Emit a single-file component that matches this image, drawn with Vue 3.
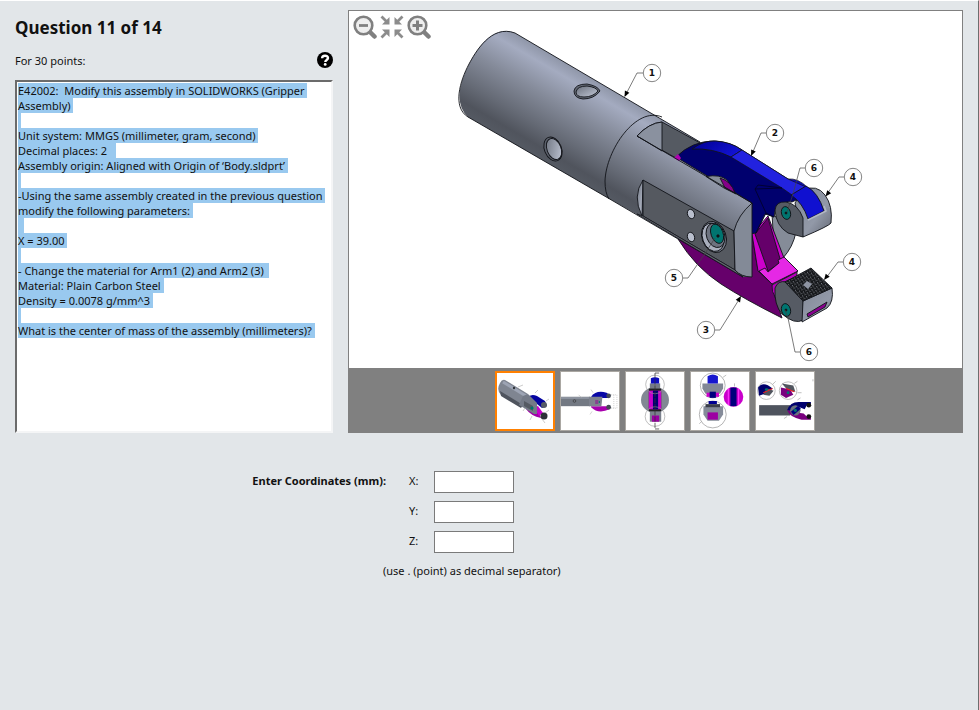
<script setup>
import { ref, reactive } from 'vue'

const lines = [
  'E42002:  Modify this assembly in SOLIDWORKS (Gripper ',
  'Assembly) ',
  ' ',
  'Unit system: MMGS (millimeter, gram, second) ',
  'Decimal places: 2   ',
  'Assembly origin: Aligned with Origin of ‘Body.sldprt’ ',
  ' ',
  '-Using the same assembly created in the previous question ',
  'modify the following parameters: ',
  '  ',
  'X = 39.00 ',
  ' ',
  '- Change the material for Arm1 (2) and Arm2 (3)  ',
  'Material: Plain Carbon Steel ',
  'Density = 0.0078 g/mm^3 ',
  ' ',
  'What is the center of mass of the assembly (millimeters)? '
]

const balloons = [
  { n: 1, x: 652, y: 73, path: 'M643 73H637L625 96', tip: [624.5, 97, 26] },
  { n: 2, x: 775, y: 133, path: 'M766 133H761L752 154', tip: [751, 156, 24] },
  { n: 6, x: 814, y: 168, path: 'M805 168H800L793 194L787 212' },
  { n: 4, x: 853, y: 177, path: 'M844 177H839L827 194', tip: [825.5, 196.5, 38] },
  { n: 4, x: 852, y: 262, path: 'M843 262H838L826 278', tip: [824, 280, 38] },
  { n: 5, x: 674, y: 278, path: 'M683 278H688L704 255L715 238' },
  { n: 3, x: 706, y: 330, path: 'M715 330H720L740 298', tip: [741, 296, 211] },
  { n: 6, x: 809, y: 352, path: 'M800 352H795L788 318L785 310' }
]

const thumbs = ['Isometric view', 'Side view', 'Front view', 'Detail views', 'Section views']
const active = ref(0)
const coords = reactive({ X: '', Y: '', Z: '' })
</script>

<template>
  <main class="page">
    <div class="columns">
      <section class="question">
        <h1>Question 11 of 14</h1>
        <div class="points">
          <span>For 30 points:</span>
          <button class="help" aria-label="Help">
            <svg viewBox="0 0 16 16" width="16" height="16">
              <circle cx="8" cy="8" r="8" />
              <path d="M5.1 6.3C5.1 2.9 11 2.9 11 6.1C11 8 8.300 7.900 8.300 9.900" fill="none" stroke="#fff" stroke-width="2.400" />
              <circle cx="8.200" cy="12.400" r="1.400" fill="#fff" />
            </svg>
          </button>
        </div>
        <div class="prompt">
          <div v-for="(line, i) in lines" :key="i" class="line"><mark>{{ line }}</mark></div>
        </div>
      </section>

      <section class="viewer">
        <div class="stage">
          <svg class="drawing" viewBox="349 11 613 357" role="img" aria-label="Gripper assembly">
            <defs>
              <linearGradient id="steel" gradientUnits="userSpaceOnUse" x1="515" y1="33" x2="466" y2="117">
                <stop offset="0" stop-color="#8f96a8" />
                <stop offset=".13" stop-color="#a4abc0" />
                <stop offset=".4" stop-color="#858b9a" />
                <stop offset=".7" stop-color="#656a75" />
                <stop offset=".88" stop-color="#50545d" />
                <stop offset="1" stop-color="#555a63" />
              </linearGradient>
              <linearGradient id="pad" x1="0" y1="0" x2="1" y2="1">
                <stop offset="0" stop-color="#838a98" />
                <stop offset=".6" stop-color="#9299a8" />
                <stop offset="1" stop-color="#626773" />
              </linearGradient>
              <linearGradient id="hole" x1="0" y1="0" x2="1" y2="1">
                <stop offset="0" stop-color="#6a707c" />
                <stop offset="1" stop-color="#c3c9d8" />
              </linearGradient>
              <linearGradient id="arm" x1="0" y1="0" x2="1" y2=".5">
                <stop offset="0" stop-color="#000090" />
                <stop offset="1" stop-color="#1212d2" />
              </linearGradient>
              <pattern id="knurl" width="4" height="4" patternUnits="userSpaceOnUse" patternTransform="rotate(12)">
                <rect width="4" height="4" fill="#15171a" />
                <path d="M0 1.500L1.500 0M2 2.200L3.500 3.500" stroke="#8b9098" stroke-width=".9" />
              </pattern>
            </defs>

            <g stroke="#111318" stroke-width=".9" stroke-linejoin="round">
              <path d="M772 214L796 232Q793 247 783 258L774 246Z" fill="#858c98" />
              <path d="M678 239Q695 267 721 284Q744 299 782 318L776 300L772 283L758 270L752 234L720 220Z" fill="#66006b" />
              <path d="M752 234L768 216L784 258L798 271L772 284L758 271Z" fill="#cc00cc" />
              <path d="M755 234L768 218L781 262L768 271Z" fill="#65006a" />
              <path d="M759 271L765 268L768 272L779 263L778 260L784 257L798 271L772 284Z" fill="#e528e5" />
              <path d="M772 285L797 272V277L779 284L776 299Q771 291 772 285Z" fill="#b800bd" />

              <path d="M515 33Q491 23 470 62Q450 100 468 117L608 198L643 218L743 277L752 277V203L700 142Z" fill="url(#steel)" stroke="none" />
              <path d="M700 142L515 33C491 24 475 53 469 64C460 81 452 107 468 117L608 198L743 277" fill="none" />
              <path d="M662 117C636 106 606 150 605 181Q605 193 609 199" fill="none" />
              <path d="M637 136Q649 123 662 122L702 144Q687 147 676 158Z" fill="#555a62" />
              <path d="M637 136Q649 123 662 122V151Z" fill="#8a919f" />

              <path d="M803 190Q817 184 825 195Q833 206 831 223Q829 226 803 237L795 203Z" fill="url(#pad)" />
              <path d="M676 157Q692 141 714 141Q731 142 742 150L788 179L807 195L792 202Q783 200 775 211L774 217L765 214L756 233L750 234L752 203Z" fill="#00006e" />
              <path d="M692 149Q704 140 716 141Q731 142 742 150L731 157Q713 148 692 149Z" fill="url(#arm)" />
              <path d="M788 179Q798 178 807 187L798 192Z" fill="#0b0bb8" stroke-width=".7" />
              <path d="M742 150L788 179L806 187L792 195L782 188L731 157Z" fill="#2222df" stroke-width=".7" />
              <path d="M806 186Q818 192 824 211L808 219Q803 203 791 195Z" fill="#1010d0" />
              <path d="M808 220L826 211L824 206" fill="none" stroke="#b2b7c4" stroke-width="1.600" />
              <path d="M782 188L758 185L755 189L766 213L774 217M766 213L756 233M755 189L782 188" fill="none" stroke="#00002c" />
              <path d="M674 158L678 154L681 158L679 161Z" fill="#b000b0" stroke="none" />
              <path d="M706 176.500Q720 174 727 180L736 194L724 188Z" fill="#858c98" />
              <path d="M720 178Q731 181 735 193L725 188Z" fill="#850088" />
              <path d="M775 210Q776 201 786 202Q798 204 803 218V237L788 233Q776 226 775 210Z" fill="#565b64" />

              <path d="M643 180Q632 196 642 216Z" fill="url(#hole)" />
              <path d="M643 180L734 231L735 270L643 216Z" fill="#555960" />
              <path d="M643 216L735 270L743 277L637 214Z" fill="#666b74" stroke-width=".7" />
              <path d="M734 231Q738 215 752 203V277Q741 277 735 270Z" fill="#838a97" />
              <path d="M637 136L752 203" />
              <g transform="rotate(-20 714 237)">
                <ellipse cx="714" cy="237" rx="12" ry="16" fill="#767c89" />
                <ellipse cx="713" cy="237" rx="10.500" ry="14.500" fill="#a9afbd" />
                <ellipse cx="716" cy="236" rx="9" ry="12.500" fill="#6d7380" />
                <ellipse cx="718" cy="235" rx="6" ry="10" fill="#00746f" />
              </g>
              <ellipse cx="691" cy="214" rx="3.500" ry="4.800" transform="rotate(-20 691 214)" fill="#b9bfcd" />
              <ellipse cx="691" cy="237" rx="3.500" ry="4.800" transform="rotate(-20 691 237)" fill="#b9bfcd" />
              <path d="M574 91Q575 84 587 84Q598 86 600 91Q594 99 583 99Q574 98 574 91Z" fill="#656b77" />
              <path d="M576 92Q577 86 587 86Q596 87 598 91Q593 97 584 97Q576 97 576 92Z" fill="url(#hole)" />
              <ellipse cx="553" cy="149" rx="8.500" ry="12.500" transform="rotate(-22 553 149)" fill="#5b606b" />
              <ellipse cx="554" cy="149" rx="7" ry="11" transform="rotate(-22 554 149)" fill="url(#hole)" />

              <path d="M775 288Q778 280 786 282L803 301V320Q795 325 782 314Q774 305 775 288Z" fill="#565b64" />
              <path d="M803 301L832 288Q834 302 827 308L802 322Z" fill="url(#pad)" />
              <path d="M807 314L827 302L825 307L808 317Z" fill="#8a0090" />
              <path d="M785 282L811 268L832 288L803 301Z" fill="url(#knurl)" />
              <path d="M803 285L807 281L812 284L808 289Z" fill="#8e94a2" stroke="none" />
              <ellipse cx="786" cy="213" rx="4.500" ry="6.500" transform="rotate(-15 786 213)" fill="#00746f" />
              <ellipse cx="786" cy="310" rx="4.500" ry="6.500" transform="rotate(-15 786 310)" fill="#00746f" />
              <g fill="#111"><circle cx="718" cy="236" r="1.200" /><circle cx="786" cy="213" r="1" /><circle cx="786" cy="310" r="1" /></g>
            </g>

            <g v-for="(b, i) in balloons" :key="i">
              <path :d="b.path" fill="none" stroke="#444" stroke-width=".7" />
              <path v-if="b.tip" d="M0 0L-2.500 -6H2.500Z" :transform="`translate(${b.tip[0]} ${b.tip[1]}) rotate(${b.tip[2]})`" />
              <circle :cx="b.x" :cy="b.y" r="8.700" fill="#fff" stroke="#666" stroke-width=".8" />
              <text class="num" :x="b.x" :y="b.y + 3" text-anchor="middle">{{ b.n }}</text>
            </g>
          </svg>

          <div class="tools">
            <button aria-label="Zoom out">
              <svg viewBox="0 0 24 24" width="24" height="24" fill="none" stroke="#808080">
                <path d="M16.500 16.500L21.500 21.500" stroke-width="4.500" stroke-linecap="round" />
                <circle cx="10.500" cy="10.500" r="8.800" fill="#eee" stroke-width="2.600" />
                <path d="M6 10.500H15" stroke-width="2.800" />
              </svg>
            </button>
            <button aria-label="Fit to window">
              <svg viewBox="0 0 24 24" width="24" height="24" fill="none" stroke="#8c8c8c" stroke-width="2.800">
                <path d="M1.500 1.500L7 7M22.500 1.500L17 7M1.500 22.500L7 17M22.500 22.500L17 17" />
                <path d="M9.500 2V9.500H2ZM14.500 2V9.500H22ZM2 14.500H9.500V22ZM22 14.500H14.500V22Z" fill="#8c8c8c" stroke="none" />
              </svg>
            </button>
            <button aria-label="Zoom in">
              <svg viewBox="0 0 24 24" width="24" height="24" fill="none" stroke="#808080">
                <path d="M16.500 16.500L21.500 21.500" stroke-width="4.500" stroke-linecap="round" />
                <circle cx="10.500" cy="10.500" r="8.800" fill="#eee" stroke-width="2.600" />
                <path d="M5.500 10.500H15.500M10.500 5.500V15.500" stroke-width="3" />
              </svg>
            </button>
          </div>
        </div>

        <nav class="thumbs" aria-label="Views">
          <button v-for="(t, i) in thumbs" :key="t" :aria-label="t" :class="{ active: i === active }" @click="active = i">
            <svg v-if="i === 0" viewBox="0 0 56 56">
              <path d="M31 34L42 40L44 45Q34 43 29 36Z" fill="#a000a6" />
              <path d="M30 25Q34 20 40 23L48 28L50 33L45 35L40 31V37L31 32Z" fill="#0404a0" />
              <path d="M37 34L41 33L46 40L42 43Z" fill="#c800ce" />
              <path d="M8 7L31 21L24 34L4 22Q-1 17 3 10Q5 6 8 7Z" fill="#7f8591" />
              <path d="M3 18L26 32L24 35L4 23Z" fill="#4f545e" />
              <path d="M6 9L29 23" stroke="#9da4b4" stroke-width="3" />
              <path d="M31 21L26 23L22 32L37 41H40V30Z" fill="#747a87" />
              <path d="M27 28L36 33V38L27 33Z" fill="#555a63" />
              <circle cx="35" cy="35" r="1.600" fill="#00746f" />
              <circle cx="47" cy="32" r="3" fill="#555b66" /><circle cx="47" cy="43" r="3.500" fill="#2d3138" />
              <path d="M21 14L26 12M38 20L41 17M49 28L52 26M48 40L52 37M35 43L33 47M45 46L48 50M28 35L26 38" stroke="#aaa" stroke-width=".6" />
              <circle cx="17" cy="15" r="1.200" fill="#30343a" />
            </svg>
            <svg v-else-if="i === 1" viewBox="0 0 56 56">
              <path d="M0 24H28V33H0Z" fill="#737983" /><path d="M0 25H28" stroke="#8d939f" stroke-width="2" />
              <path d="M29 24Q34 17 44 20L48 23L45 25L36 25Z" fill="#0808a6" />
              <path d="M29 33H37L45 33L47 36Q36 41 29 34Z" fill="#a800ad" />
              <path d="M27 24H40L39 33H27Z" fill="#7d828e" />
              <circle cx="46" cy="23" r="2.300" fill="#444a54" /><circle cx="46" cy="34" r="2.300" fill="#444a54" />
              <circle cx="13" cy="28" r="1.300" fill="none" stroke="#333" stroke-width=".6" />
              <path d="M33 28H36M33 30H36" stroke="#900090" /><path d="M37 28V30" stroke="#00746f" /><path d="M48 22H54V35H48M51 22V35" stroke="#aaa" stroke-width=".5" stroke-dasharray="1 1" fill="none" />
              <path d="M17 22L20 25M31 20L29 17M30 38L28 41" stroke="#aaa" stroke-width=".5" />
            </svg>
            <svg v-else-if="i === 2" viewBox="0 0 56 56">
              <ellipse cx="28" cy="27" rx="13.500" ry="12.500" fill="#828894" />
              <path d="M23 11H33V18H23Z" fill="#747a86" /><path d="M23 38H34V48H23Z" fill="#7b818d" />
              <path d="M24 6Q28 4 32 6V11H24Z" fill="#0c0cbf" />
              <path d="M22 16H34V38H22Z" fill="#222" /><path d="M22 18H34V36H22Z" fill="#c600cc" /><path d="M26 18H31V36H26Z" fill="#00006f" />
              <path d="M25 42H32V48H25Z" fill="#9c00a2" />
              <circle cx="28" cy="12" r="9" fill="none" stroke="#999" stroke-width=".6" /><circle cx="28" cy="43" r="9.500" fill="none" stroke="#999" stroke-width=".6" />
              <path d="M28 1V55M28 1H32M28 55H32" stroke="#333" stroke-width=".7" stroke-dasharray="5 1" fill="none" />
            </svg>
            <svg v-else-if="i === 3" viewBox="0 0 56 56">
              <circle cx="21" cy="13" r="12" fill="#fff" stroke="#999" stroke-width=".7" />
              <path d="M11 11H31V16L28 21H14L11 16Z" fill="#828895" /><path d="M16 4Q21 1 26 4V11H16Z" fill="#1717ce" />
              <path d="M15 20H27V24H15Z" fill="#cc00c8" /><path d="M18 19H24V25H18Z" fill="#00007d" />
              <circle cx="21" cy="41" r="13" fill="#fff" stroke="#999" stroke-width=".7" />
              <path d="M12 33H31V41L27 47H16L12 41Z" fill="#858b99" /><path d="M16 39H26V46H16Z" fill="#9c00a2" />
              <path d="M17 28H25V31H17Z" fill="#000091" /><path d="M14 31H28V34H14Z" fill="#3b3f49" />
              <circle cx="41" cy="24" r="9.500" fill="#c900cb" /><path d="M38 15H44V33H38Z" fill="#00007c" /><path d="M36 16V32M46 16V32" stroke="#ff3aff" />
              <path d="M31 5L34 3M10 48L8 50M42 14V11" stroke="#999" stroke-width=".6" />
            </svg>
            <svg v-else viewBox="0 0 56 56">
              <circle cx="10" cy="18" r="8.500" fill="#fff" stroke="#999" stroke-width=".6" /><circle cx="31" cy="18" r="8.500" fill="#fff" stroke="#999" stroke-width=".6" />
              <path d="M2 15Q7 8 16 16L11 20L3 23Z" fill="#00006c" /><path d="M11 16L17 18L13 23L7 22Z" fill="#50555e" />
              <path d="M25 11L36 13L38 19L31 18Z" fill="#50555e" /><path d="M24 15L33 17L36 22L29 25L24 22Z" fill="#79007e" />
              <path d="M7 20L16 16M29 16L37 19" stroke="#e22" stroke-width="1" />
              <circle cx="10" cy="17" r="1.400" fill="#00746f" /><circle cx="31" cy="20" r="1.400" fill="#00746f" />
              <path d="M3 32H33V42H3Z" fill="#4f545e" />
              <path d="M30 37Q33 29 41 29H53V32H49L47 36L42 34L38 38Z" fill="#00006d" />
              <path d="M30 37L39 39L46 40L49 43H53V46H44Q33 44 30 37Z" fill="#79007e" />
              <circle cx="38" cy="37" r="5" fill="#69717d" /><path d="M35 40L42 34" stroke="#00007c" stroke-width="4" /><circle cx="38" cy="37" r="1.500" fill="#00746f" />
              <circle cx="51" cy="32" r="2.300" fill="#111" /><circle cx="51" cy="43" r="2.300" fill="#111" />
              <path d="M16 12L19 9M37 11L40 9M40 20H44M40 27L43 25M30 43L27 45M55 7V9" stroke="#999" stroke-width=".6" />
            </svg>
          </button>
        </nav>
      </section>
    </div>

    <form class="answer" @submit.prevent>
      <strong>Enter Coordinates (mm):</strong>
      <div class="fields">
        <div v-for="(v, axis) in coords" :key="axis" class="field">
          <label :for="`axis-${axis}`">{{ axis }}:</label>
          <input :id="`axis-${axis}`" v-model="coords[axis]" type="text" />
        </div>
      </div>
      <p>(use . (point) as decimal separator)</p>
    </form>
  </main>
</template>

<style>
body {
  background: #e2e6e9;
}
</style>

<style scoped>
.page {
  box-sizing: border-box;
  min-height: 100vh;
  padding: 9px 15px 0 15px;
  border-top: 1px solid #fff;
  border-right: 1px solid #6e6e6e;
  background: #e2e6e9;
  color: #111;
  font: 11px/15px "Noto Sans", "Open Sans", sans-serif;
}
button {
  display: block;
  padding: 0;
  border: 0;
  background: none;
  cursor: pointer;
}
svg {
  display: block;
}
.columns {
  display: flex;
  gap: 15px;
}
.question {
  display: flex;
  flex-direction: column;
  flex: 0 0 318px;
}
h1 {
  margin: 6px 0 0;
  font-size: 17px;
  line-height: 24px;
}
.points {
  display: flex;
  align-items: center;
  justify-content: space-between;
  height: 24px;
  margin: 8px 0;
}
.prompt {
  flex: 1;
  box-sizing: border-box;
  padding: 1px 0;
  overflow: hidden;
  border: 2px solid;
  border-color: #6b6b6b #f4f5f6 #f4f5f6 #6b6b6b;
  background: #fff;
}
.line {
  height: 15px;
  padding-left: 1px;
  white-space: pre;
}
mark {
  background: #99c9ef;
  color: inherit;
}
.viewer {
  flex: 1;
  min-width: 0;
}
.stage {
  position: relative;
  border: 1px solid #808080;
  border-bottom: 0;
  background: #fff;
}
.drawing {
  width: 100%;
  height: auto;
}
.num {
  font: bold 9px "DejaVu Sans", sans-serif;
  fill: #111;
}
.tools {
  position: absolute;
  top: 4px;
  left: 4px;
  display: flex;
  gap: 3px;
}
.thumbs {
  display: flex;
  justify-content: center;
  gap: 5px;
  padding: 3px 2px 2px 0;
  background: #808080;
}
.thumbs button {
  box-sizing: border-box;
  width: 60px;
  height: 60px;
  border: 1px solid #aaa7a2;
  background: #fff;
}
.thumbs button.active {
  border: 2px solid #ff8000;
}
.answer {
  display: grid;
  grid-template-columns: 371px auto;
  column-gap: 23px;
  justify-content: start;
  padding-top: 38px;
}
.answer strong {
  line-height: 20px;
  text-align: right;
}
.field {
  display: flex;
  height: 30px;
}
.field label {
  width: 25px;
  line-height: 20px;
}
.field input {
  box-sizing: border-box;
  width: 80px;
  height: 22px;
  border: 1px solid #7a7a7a;
  background: #fff;
  font: inherit;
}
.answer p {
  grid-column: 1 / -1;
  margin: 2px 0 0 368px;
}
</style>
